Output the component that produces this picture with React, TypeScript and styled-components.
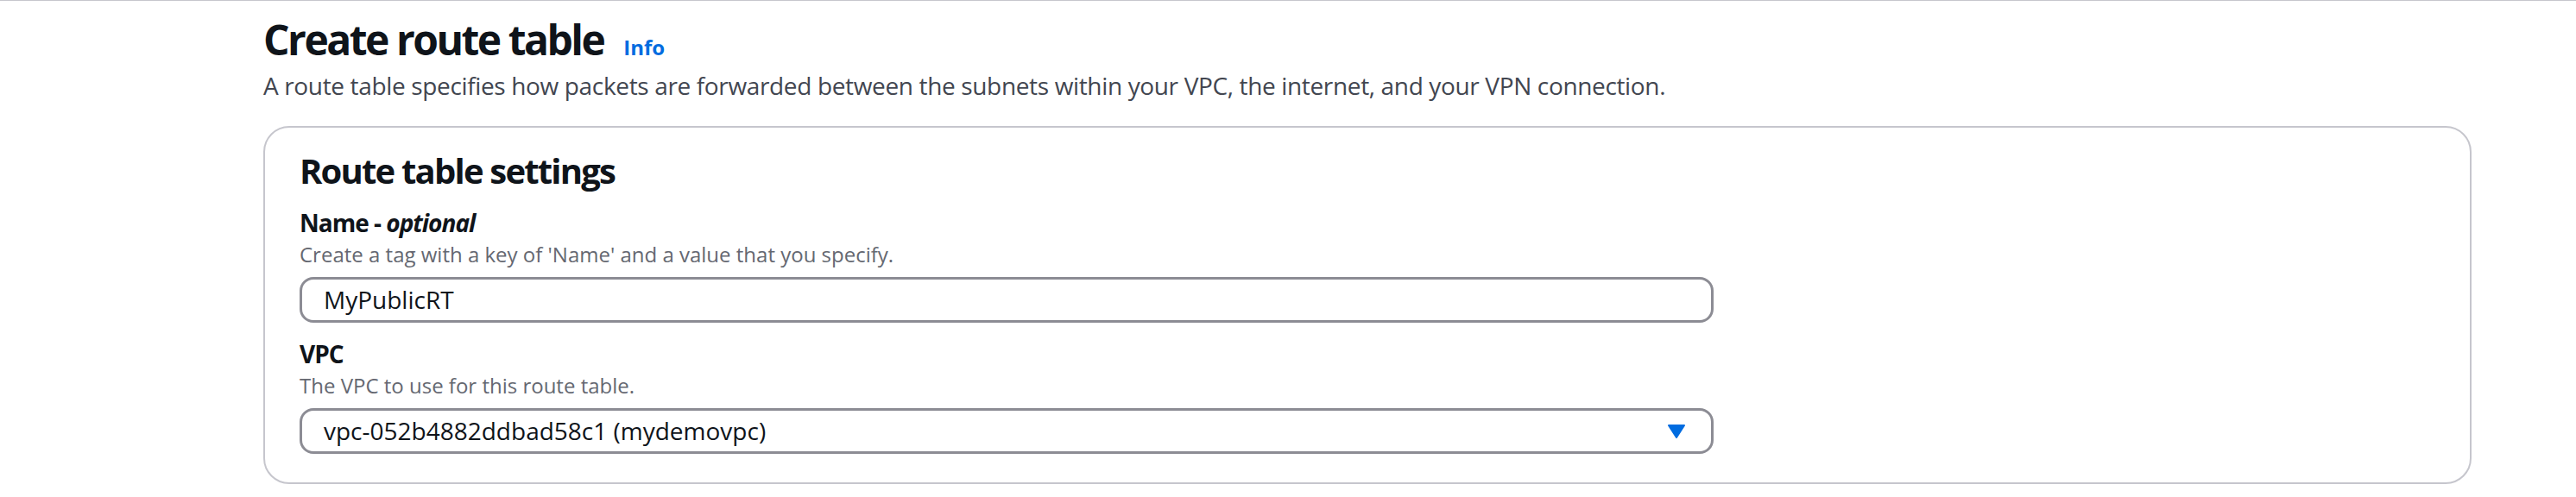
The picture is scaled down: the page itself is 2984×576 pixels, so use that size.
import styled, { createGlobalStyle } from "styled-components";

const GlobalStyle = createGlobalStyle`
  html, body {
    margin: 0;
    padding: 0;
    background: #ffffff;
  }
  body {
    font-family: "Open Sans", "Noto Sans", Arial, sans-serif;
    color: #0f141a;
  }
`;

const Page = styled.div`
  border-top: 1px solid #c6c6cd;
  padding: 15px 121px 0 305px;
  height: 575px;
  box-sizing: border-box;
`;

const TitleRow = styled.div`
  display: flex;
  align-items: baseline;
  gap: 23px;
`;

const Title = styled.h1`
  margin: 0;
  font-size: 48px;
  line-height: 60px;
  font-weight: 700;
  letter-spacing: -2.5px;
  color: #0f141a;
`;

const InfoLink = styled.a`
  font-size: 24px;
  font-weight: 700;
  color: #006ce0;
  text-decoration: none;
`;

const Subtitle = styled.p`
  margin: 3px 0 0;
  font-size: 28px;
  line-height: 40px;
  letter-spacing: -0.35px;
  color: #424650;
`;

const Card = styled.section`
  margin-top: 27px;
  border: 2px solid #c6c6cd;
  border-radius: 30px;
  padding: 26px 40px 33px;
`;

const CardTitle = styled.h2`
  margin: 0;
  font-size: 40px;
  line-height: 48px;
  font-weight: 700;
  letter-spacing: -1.8px;
  color: #0f141a;
`;

const Field = styled.div<{ $gap: number }>`
  margin-top: ${(p) => p.$gap}px;
  display: flex;
  flex-direction: column;
`;

const Label = styled.label`
  font-size: 28px;
  line-height: 40px;
  font-weight: 700;
  letter-spacing: -1px;
  color: #0f141a;

  em {
    font-weight: 700;
  }
`;

const Hint = styled.div`
  margin-top: 1px;
  font-size: 24px;
  line-height: 32px;
  color: #656871;
`;

const Box = styled.div`
  margin-top: 10px;
  width: 1638px;
  height: 53px;
  box-sizing: border-box;
  border: 3px solid #8c8c94;
  border-radius: 16px;
  padding: 0 30px 0 25px;
  display: flex;
  align-items: center;
  justify-content: space-between;
  font-size: 28px;
  line-height: 47px;
  color: #0f141a;
`;

const Arrow = styled.svg`
  width: 20px;
  height: 16px;
  flex-shrink: 0;
`;

export default function App() {
  return (
    <>
      <GlobalStyle />
      <Page>
        <TitleRow>
          <Title>Create route table</Title>
          <InfoLink href="#">Info</InfoLink>
        </TitleRow>
        <Subtitle>
          A route table specifies how packets are forwarded between the subnets within your VPC,
          the internet, and your VPN connection.
        </Subtitle>
        <Card>
          <CardTitle>Route table settings</CardTitle>
          <Field $gap={16}>
            <Label>
              Name - <em>optional</em>
            </Label>
            <Hint>Create a tag with a key of 'Name' and a value that you specify.</Hint>
            <Box>MyPublicRT</Box>
          </Field>
          <Field $gap={16}>
            <Label>VPC</Label>
            <Hint>The VPC to use for this route table.</Hint>
            <Box>
              <span>vpc-052b4882ddbad58c1 (mydemovpc)</span>
              <Arrow viewBox="0 0 20 16">
                <path d="M1 1h18L10 15z" fill="#006ce0" stroke="#006ce0" strokeWidth="2" strokeLinejoin="round" />
              </Arrow>
            </Box>
          </Field>
        </Card>
      </Page>
    </>
  );
}
